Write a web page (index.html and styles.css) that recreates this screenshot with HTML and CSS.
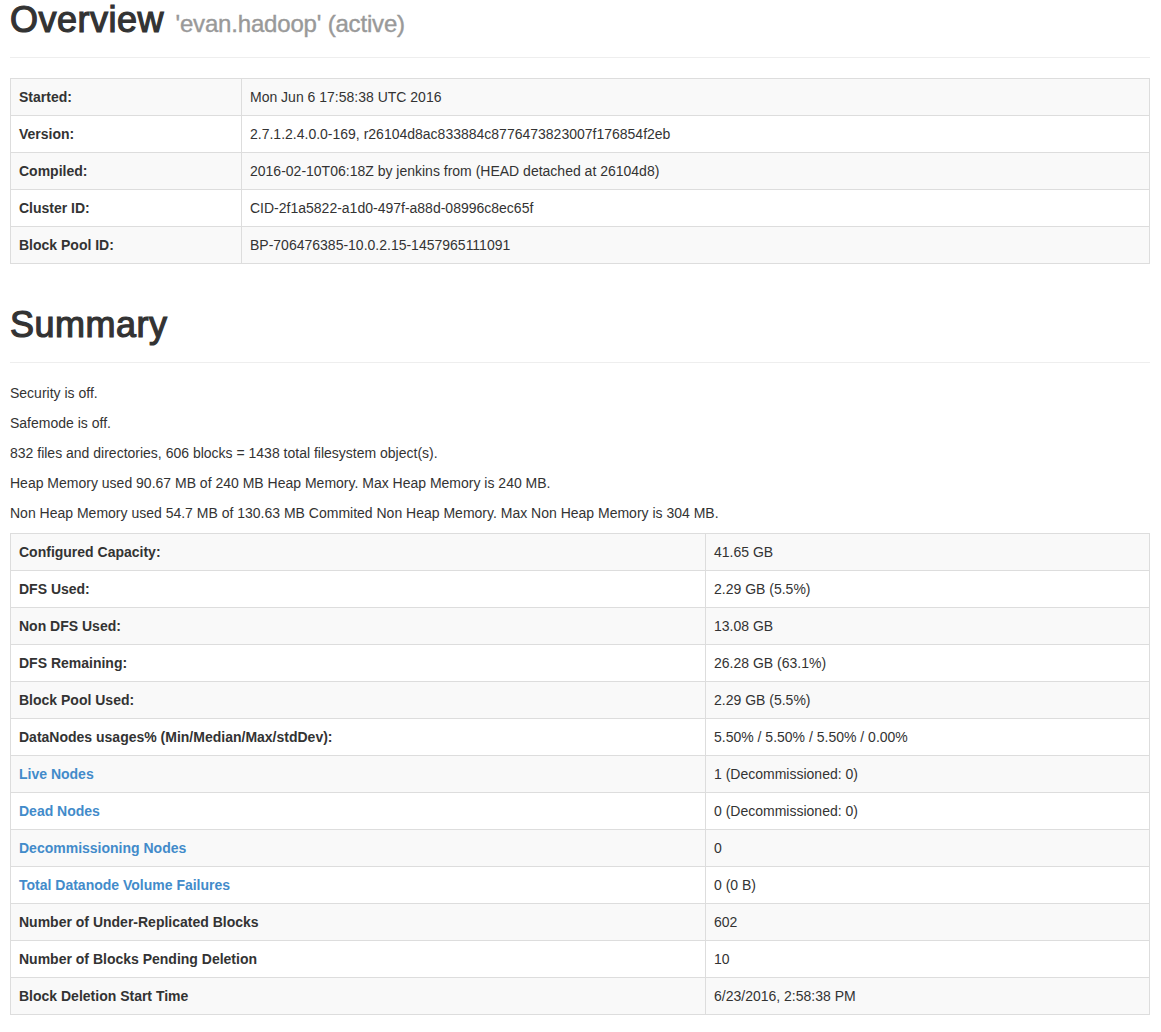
FILE: index.html
```
<!DOCTYPE html>
<html lang="en">
<head>
    <meta charset="UTF-8">
    <meta name="viewport" content="width=device-width, initial-scale=1.0">
    <title>Namenode information</title>
    <link rel="stylesheet" href="styles.css">
</head>
<body>
    <div class="container">
        <div class="page-header">
            <h1>Overview <small>'evan.hadoop' (active)</small></h1>
        </div>
        <table class="table table-overview">
            <tr><th>Started:</th><td>Mon Jun 6 17:58:38 UTC 2016</td></tr>
            <tr><th>Version:</th><td>2.7.1.2.4.0.0-169, r26104d8ac833884c8776473823007f176854f2eb</td></tr>
            <tr><th>Compiled:</th><td>2016-02-10T06:18Z by jenkins from (HEAD detached at 26104d8)</td></tr>
            <tr><th>Cluster ID:</th><td>CID-2f1a5822-a1d0-497f-a88d-08996c8ec65f</td></tr>
            <tr><th>Block Pool ID:</th><td>BP-706476385-10.0.2.15-1457965111091</td></tr>
        </table>

        <div class="page-header">
            <h1>Summary</h1>
        </div>
        <p>Security is off.</p>
        <p>Safemode is off.</p>
        <p>832 files and directories, 606 blocks = 1438 total filesystem object(s).</p>
        <p>Heap Memory used 90.67 MB of 240 MB Heap Memory. Max Heap Memory is 240 MB.</p>
        <p>Non Heap Memory used 54.7 MB of 130.63 MB Commited Non Heap Memory. Max Non Heap Memory is 304 MB.</p>
        <table class="table table-summary">
            <tr><th>Configured Capacity:</th><td>41.65 GB</td></tr>
            <tr><th>DFS Used:</th><td>2.29 GB (5.5%)</td></tr>
            <tr><th>Non DFS Used:</th><td>13.08 GB</td></tr>
            <tr><th>DFS Remaining:</th><td>26.28 GB (63.1%)</td></tr>
            <tr><th>Block Pool Used:</th><td>2.29 GB (5.5%)</td></tr>
            <tr><th>DataNodes usages% (Min/Median/Max/stdDev):</th><td>5.50% / 5.50% / 5.50% / 0.00%</td></tr>
            <tr><th><a href="#live">Live Nodes</a></th><td>1 (Decommissioned: 0)</td></tr>
            <tr><th><a href="#dead">Dead Nodes</a></th><td>0 (Decommissioned: 0)</td></tr>
            <tr><th><a href="#decommissioning">Decommissioning Nodes</a></th><td>0</td></tr>
            <tr><th><a href="#failures">Total Datanode Volume Failures</a></th><td>0 (0 B)</td></tr>
            <tr><th>Number of Under-Replicated Blocks</th><td>602</td></tr>
            <tr><th>Number of Blocks Pending Deletion</th><td>10</td></tr>
            <tr><th>Block Deletion Start Time</th><td>6/23/2016, 2:58:38 PM</td></tr>
        </table>
    </div>
</body>
</html>
```
FILE: styles.css
```
* {
    box-sizing: border-box;
}

body {
    margin: 0;
    font-family: "Helvetica Neue", Helvetica, "Liberation Sans", Arial, sans-serif;
    font-size: 14px;
    line-height: 20px;
    color: #333;
    background: #fff;
    overflow: hidden;
}

.container {
    width: 1140px;
    margin-left: 10px;
}

.page-header {
    padding-bottom: 17px;
    margin: 41px 0 20px;
    border-bottom: 1px solid #eee;
}

.page-header:first-child {
    margin-top: 0;
}

/* medium weight: regular face with a thin stroke */
h1 {
    margin: 0;
    font-size: 36px;
    font-weight: normal;
    line-height: 40px;
    letter-spacing: 0.5px;
    -webkit-text-stroke: 1.2px #333;
}

h1 small {
    margin-left: 1px;
    font-size: 24px;
    line-height: 1;
    letter-spacing: -0.18px;
    color: #999;
    -webkit-text-stroke: 0.4px #999;
}

p {
    margin: 0 0 10px;
}

a {
    color: #428bca;
    text-decoration: none;
}

.table {
    width: 100%;
    table-layout: fixed;
    border-collapse: collapse;
    margin-bottom: 20px;
}

.table th,
.table td {
    padding: 8px;
    border: 1px solid #ddd;
    text-align: left;
    vertical-align: top;
}

.table tr:nth-child(odd) {
    background: #f9f9f9;
}

.table-overview th {
    width: 231px;
}

.table-summary th {
    width: 695px;
}
```
